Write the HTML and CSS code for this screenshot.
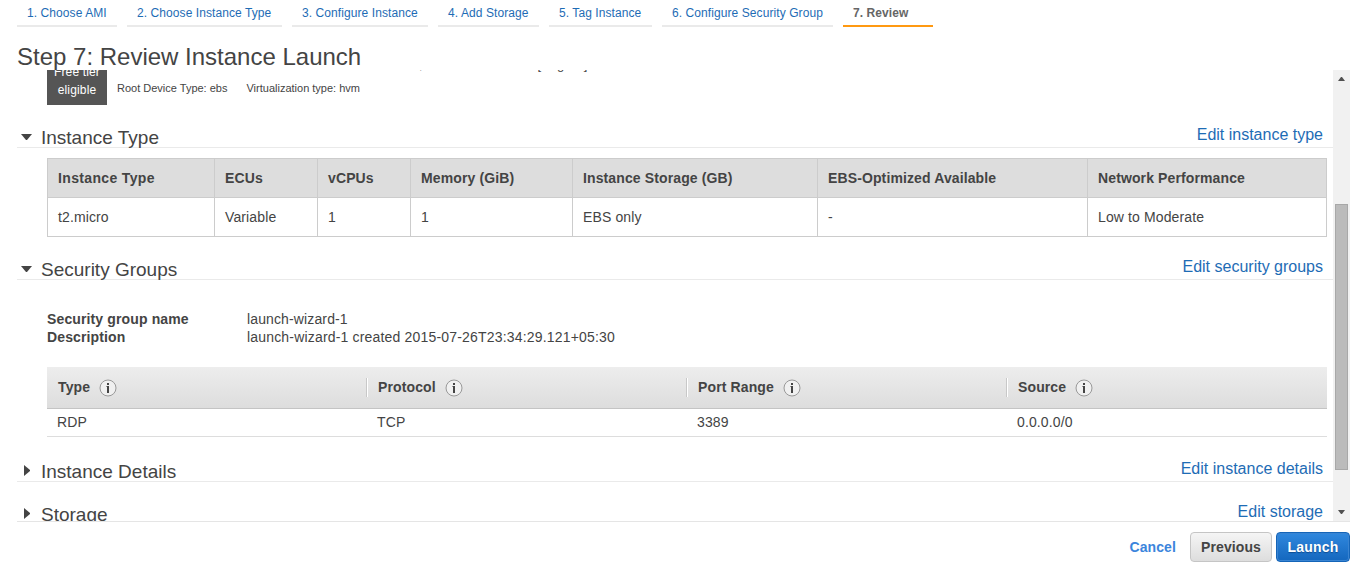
FILE: index.html
```html
<!DOCTYPE html>
<html lang="en">
<head>
<meta charset="utf-8">
<title>Review Instance Launch</title>
<link rel="stylesheet" href="styles.css">
</head>
<body>
<div class="wizard">
  <nav class="steps">
    <a class="step step-ami">1. Choose AMI</a>
    <a class="step step-type">2. Choose Instance Type</a>
    <a class="step step-configure">3. Configure Instance</a>
    <a class="step step-storage">4. Add Storage</a>
    <a class="step step-tag">5. Tag Instance</a>
    <a class="step step-security">6. Configure Security Group</a>
    <a class="step step-review active">7. Review</a>
  </nav>
  <h1 class="title">Step 7: Review Instance Launch</h1>
  <div class="viewport">
    <main class="content">
      <div class="ami">
        <div class="badge"><span>Free tier</span><span>eligible</span></div>
        <div class="ami-info">
          <div class="ami-desc">Microsoft Windows Server 2012 R2 Standard edition, 64-bit architecture. [English]</div>
          <div class="ami-meta"><span>Root Device Type: ebs</span><span>Virtualization type: hvm</span></div>
        </div>
      </div>

      <section class="section instance-type">
        <header class="section-head">
          <svg class="arrow" viewBox="0 0 12 12"><path d="M0 3h11L6 9H5z"/></svg>
          <h2>Instance Type</h2>
          <a>Edit instance type</a>
        </header>
        <table class="specs">
          <colgroup><col class="c1"><col class="c2"><col class="c3"><col class="c4"><col class="c5"><col class="c6"><col class="c7"></colgroup>
          <tr><th class="wide">Instance Type</th><th>ECUs</th><th>vCPUs</th><th>Memory (GiB)</th><th>Instance Storage (GB)</th><th>EBS-Optimized Available</th><th>Network Performance</th></tr>
          <tr><td>t2.micro</td><td>Variable</td><td>1</td><td>1</td><td>EBS only</td><td>-</td><td>Low to Moderate</td></tr>
        </table>
      </section>

      <section class="section security">
        <header class="section-head">
          <svg class="arrow" viewBox="0 0 12 12"><path d="M0 3h11L6 9H5z"/></svg>
          <h2>Security Groups</h2>
          <a>Edit security groups</a>
        </header>
        <dl class="facts">
          <dt>Security group name</dt><dd>launch-wizard-1</dd>
          <dt>Description</dt><dd class="long">launch-wizard-1 created 2015-07-26T23:34:29.121+05:30</dd>
        </dl>
        <div class="rules">
          <div class="rules-head">
            <div class="rules-col">Type <svg class="info" viewBox="0 0 18 18"><circle cx="9" cy="9" r="8"/><path d="M8 4h2v2H8zM7.500 7H10v7H8V8h-.5z"/></svg></div>
            <div class="rules-col">Protocol <svg class="info" viewBox="0 0 18 18"><circle cx="9" cy="9" r="8"/><path d="M8 4h2v2H8zM7.500 7H10v7H8V8h-.5z"/></svg></div>
            <div class="rules-col">Port Range <svg class="info" viewBox="0 0 18 18"><circle cx="9" cy="9" r="8"/><path d="M8 4h2v2H8zM7.500 7H10v7H8V8h-.5z"/></svg></div>
            <div class="rules-col">Source <svg class="info" viewBox="0 0 18 18"><circle cx="9" cy="9" r="8"/><path d="M8 4h2v2H8zM7.500 7H10v7H8V8h-.5z"/></svg></div>
          </div>
          <div class="rules-row"><span>RDP</span><span>TCP</span><span>3389</span><span>0.0.0.0/0</span></div>
        </div>
      </section>

      <section class="section details">
        <header class="section-head">
          <svg class="arrow" viewBox="0 0 12 12"><path d="M3 0v11L9 6V5z"/></svg>
          <h2>Instance Details</h2>
          <a>Edit instance details</a>
        </header>
      </section>

      <section class="section storage">
        <header class="section-head">
          <svg class="arrow" viewBox="0 0 12 12"><path d="M3 0v11L9 6V5z"/></svg>
          <h2>Storage</h2>
          <a>Edit storage</a>
        </header>
      </section>
    </main>
    <div class="scrollbar">
      <svg class="scroll-arrow" viewBox="0 0 17 17"><path d="M5 11h7L9 7H8z"/></svg>
      <div class="thumb"></div>
      <svg class="scroll-arrow" viewBox="0 0 17 17"><path d="M5 6h7L9 10H8z"/></svg>
    </div>
  </div>
  <footer class="actions">
    <a class="cancel">Cancel</a>
    <button class="btn previous">Previous</button>
    <button class="btn launch">Launch</button>
  </footer>
</div>
</body>
</html>
```
FILE: styles.css
```css
* { box-sizing: border-box; }
body {
  margin: 0;
  background: #fff;
  color: #444;
  font-family: "Liberation Sans", Arial, sans-serif;
  font-size: 14px;
  overflow: hidden;
}
.wizard { width: 1333px; margin-left: 17px; }

.steps { display: flex; gap: 10px; height: 27px; }
.step {
  padding: 5px 0 0 10px;
  border-bottom: 2px solid #eaeaea;
  color: #1e6cb5;
  font-size: 12px;
  line-height: 16px;
  letter-spacing: 0.08px;
  white-space: nowrap;
}
.step-ami { width: 100px; }
.step-type { width: 155px; }
.step-configure { width: 136px; }
.step-storage { width: 101px; }
.step-tag { width: 103px; }
.step-security { width: 171px; }
.step-review { width: 90px; }
.step.active { color: #666; font-weight: bold; border-color: #ff9911; }

.title {
  margin: 0;
  height: 43px;
  padding-top: 16px;
  font-size: 24px;
  font-weight: normal;
  line-height: 27px;
}

.viewport {
  display: flex;
  height: 452px;
  border-bottom: 1px solid #e5e5e5;
  overflow: hidden;
}
.content { width: 1316px; }

.ami { display: flex; height: 35px; align-items: flex-end; margin-left: 30px; }
.badge {
  display: flex;
  flex-direction: column;
  flex: none;
  width: 60px;
  height: 46px;
  padding-top: 4px;
  background: #555;
  color: #fff;
  font-size: 12px;
  line-height: 18px;
  text-align: center;
  letter-spacing: 0.15px;
}
.ami-info { margin-left: 10px; height: 46px; }
.ami-desc { font-size: 13px; line-height: 16px; margin-top: -2px; white-space: nowrap; }
.ami-meta { display: flex; gap: 19px; margin-top: 8px; font-size: 11px; line-height: 14px; }

.section-head {
  display: flex;
  height: 22px;
  border-bottom: 1px solid #eaeaea;
  padding: 0 10px 0 4px;
}
.arrow { width: 12px; height: 12px; margin-top: 5px; fill: #444; flex: none; }
.section-head h2 {
  margin: 0 0 0 8px;
  font-size: 19px;
  font-weight: normal;
  line-height: 24px;
}
.section-head a { margin-left: auto; color: #1e6cb5; font-size: 16px; line-height: 18px; }

.instance-type { margin-top: 21px; }
.specs {
  width: 1280px;
  margin: 10px 0 0 30px;
  table-layout: fixed;
  border-collapse: collapse;
  letter-spacing: 0.12px;
}
.specs th, .specs td { height: 39px; padding: 0 10px; border: 1px solid #ccc; text-align: left; }
.specs th { background: #ddd; }
.specs th.wide { letter-spacing: 0.35px; }
.c1 { width: 167px; }
.c2 { width: 103px; }
.c3 { width: 93px; }
.c4 { width: 162px; }
.c5 { width: 245px; }
.c6 { width: 270px; }
.c7 { width: 239px; }

.security { margin-top: 21px; }
.facts {
  display: grid;
  grid-template-columns: 200px auto;
  margin: 30px 0 0 30px;
  line-height: 18px;
  letter-spacing: 0.13px;
}
.facts dt { font-weight: bold; }
.facts dd { margin: 0; }
.facts dd.long { letter-spacing: 0.18px; }
.rules { width: 1280px; margin: 21px 0 0 30px; letter-spacing: 0.12px; }
.rules-head {
  display: flex;
  align-items: center;
  height: 42px;
  background: linear-gradient(#ededed, #ddd);
  border-bottom: 1px solid #c4c4c4;
  font-weight: bold;
}
.rules-col {
  display: flex;
  align-items: center;
  width: 320px;
  height: 19px;
  padding: 0 0 1px 10px;
  border-left: 1px solid #fff;
  box-shadow: -1px 0 #c8c8c8;
}
.rules-col:first-child { padding-left: 11px; border: 0; box-shadow: none; }
.info { width: 18px; height: 18px; margin: 1px 0 0 9px; fill: #444; }
.info circle { fill: #f0f0f0; stroke: #999; }
.rules-row { display: grid; grid-template-columns: repeat(4, 320px); height: 28px; line-height: 27px; border-bottom: 1px solid #ddd; }
.rules-row span { padding-left: 10px; }

.details { margin-top: 23px; }
.storage { margin-top: 21px; }

.scrollbar {
  display: flex;
  flex-direction: column;
  justify-content: space-between;
  width: 17px;
  height: 451px;
  background: #f1f1f1;
}
.scroll-arrow { width: 17px; height: 17px; fill: #505050; }
.thumb { width: 13px; height: 266px; margin: 82px 0 0 2px; background: #bbb; border: 1px solid #a8a8a8; }

.actions { display: flex; align-items: center; justify-content: flex-end; margin-top: 10px; height: 30px; font-weight: bold; }
.cancel { margin-right: 14px; color: #3b85dc; letter-spacing: 0.1px; }
.btn {
  height: 30px;
  padding: 0;
  border: 1px solid #c5c5c5;
  border-radius: 4px;
  font: bold 14px "Liberation Sans", Arial, sans-serif;
  letter-spacing: 0.08px;
}
.previous { width: 82px; color: #444; background: linear-gradient(#f5f5f5, #ddd); }
.launch {
  width: 74px;
  margin-left: 4px;
  color: #fff;
  border-color: #1565b8;
  background: linear-gradient(#3088de, #1467be);
  box-shadow: inset 0 0 0 1px #3984d2;
  text-shadow: 0 1px 1px #0e4d92;
  letter-spacing: 0.2px;
}
```
